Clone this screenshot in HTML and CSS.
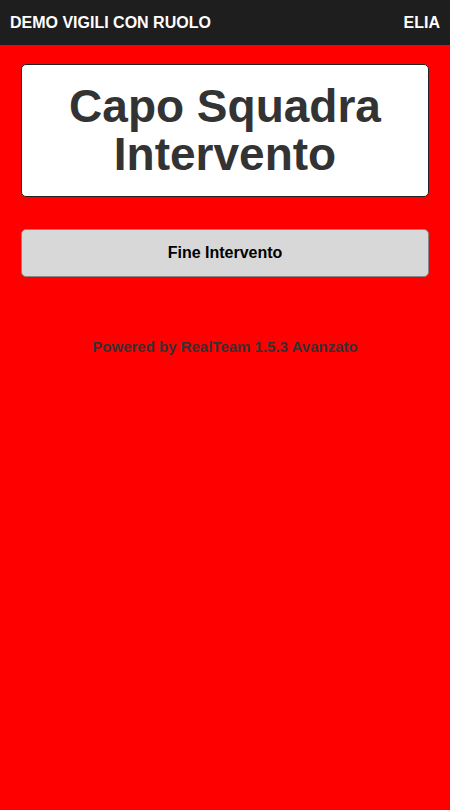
FILE: index.html
```html
<!DOCTYPE html>
<html lang="it">
<head>
<meta charset="utf-8">
<title>Demo Vigili</title>
<link rel="stylesheet" href="styles.css">
</head>
<body>
<header class="topbar">
  <span class="title">DEMO VIGILI CON RUOLO</span>
  <span class="user">ELIA</span>
</header>
<main class="content">
  <div class="role-card">Capo Squadra Intervento</div>
  <button class="action-btn">Fine Intervento</button>
  <p class="powered">Powered by RealTeam 1.5.3 Avanzato</p>
</main>
</body>
</html>
```
FILE: styles.css
```css
html, body {
  margin: 0;
  padding: 0;
  height: 100%;
}
body {
  background: #ff0000;
  font-family: "Liberation Sans", Arial, Helvetica, sans-serif;
}
.topbar {
  height: 45px;
  background: #1e1e1e;
  color: #ffffff;
  display: flex;
  align-items: center;
  justify-content: space-between;
  padding: 0 10px;
  font-weight: bold;
  font-size: 16px;
}
.content {
  padding: 19px 21px 0;
  display: flex;
  flex-direction: column;
}
.role-card {
  background: #ffffff;
  border: 1px solid #222;
  border-radius: 5px;
  height: 133px;
  box-sizing: border-box;
  display: flex;
  align-items: center;
  justify-content: center;
  text-align: center;
  padding: 0 40px 2px;
  color: #333333;
  font-weight: bold;
  font-size: 46px;
  line-height: 48px;
}
.action-btn {
  margin-top: 32px;
  height: 48px;
  box-sizing: border-box;
  background: #d8d8d8;
  border: 1px solid #888;
  border-radius: 5px;
  font-family: inherit;
  font-weight: bold;
  font-size: 16px;
  color: #000;
}
.powered {
  margin: 61px 0 0;
  text-align: center;
  font-weight: bold;
  font-size: 15px;
  color: #333;
}
```
